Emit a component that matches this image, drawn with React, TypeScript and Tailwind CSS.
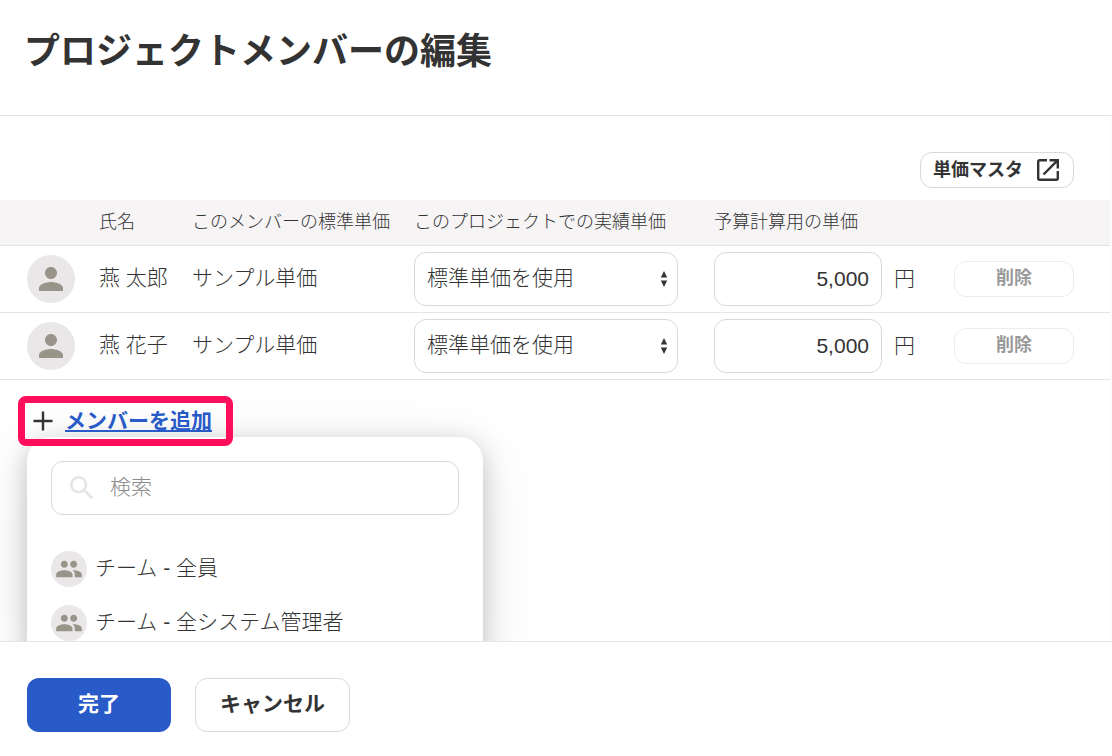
import React, { useState } from 'react';
import { MdPeople, MdPerson, MdSearch } from 'react-icons/md';

interface Member {
  id: string;
  name: string;
  standardRate: string;
  budgetRate: string;
}

const MEMBERS: Member[] = [
  { id: 'taro', name: '燕 太郎', standardRate: 'サンプル単価', budgetRate: '5,000' },
  { id: 'hanako', name: '燕 花子', standardRate: 'サンプル単価', budgetRate: '5,000' },
];

const TEAMS = ['チーム - 全員', 'チーム - 全システム管理者'];

const OpenInNewIcon = () => (
  <svg className="w-[26px] h-[26px]" viewBox="0 0 26 26" fill="none" stroke="currentColor" strokeWidth="2.4" aria-hidden="true">
    <path d="M12 3.200H4.700a1.500 1.500 0 0 0-1.500 1.500V21.300a1.500 1.500 0 0 0 1.500 1.500H21.300a1.500 1.500 0 0 0 1.500-1.500V14" />
    <path d="M14.500 3.200h8.300v8.300M22.300 3.700 8.500 17.500" />
  </svg>
);

const PlusIcon = () => (
  <svg className="w-5 h-5" viewBox="0 0 20 20" fill="none" stroke="currentColor" strokeWidth="2.4" aria-hidden="true">
    <path d="M10 .5v19M.5 10h19" />
  </svg>
);

const SortArrows = () => (
  <svg className="absolute right-2.5 top-[19px] w-2 h-4 pointer-events-none" viewBox="0 0 8 16" fill="currentColor" aria-hidden="true">
    <path d="M4 0l3.200 6.500H.8zM4 16l3.200-6.500H.8z" />
  </svg>
);

const MemberRow: React.FC<{ member: Member }> = ({ member }) => {
  const [budget, setBudget] = useState(member.budgetRate);

  return (
    <tr className="border-b border-[#e5e5e5]">
      <td className="py-1.5 pl-[27px]">
        <div className="flex items-center justify-center w-12 h-12 rounded-full bg-[#e9e7e7] text-[#99948a]">
          <MdPerson className="w-9 h-9" />
        </div>
      </td>
      <td className="px-3 pb-0.5 whitespace-nowrap">{member.name}</td>
      <td className="px-3 pb-0.5 whitespace-nowrap">{member.standardRate}</td>
      <td className="py-1.5 pl-3 pr-6">
        <div className="relative">
          <select
            aria-label={`${member.name} このプロジェクトでの実績単価`}
            className="block w-full h-[54px] pl-3 pr-8 pb-0.5 appearance-none bg-white border border-[#d9d9d9] rounded-xl"
          >
            <option>標準単価を使用</option>
          </select>
          <SortArrows />
        </div>
      </td>
      <td className="py-1.5 px-3">
        <div className="flex items-center gap-3">
          <input
            type="text"
            aria-label={`${member.name} 予算計算用の単価`}
            value={budget}
            onChange={(e) => setBudget(e.target.value)}
            className="w-[168px] h-[54px] px-3 text-right bg-white border border-[#d9d9d9] rounded-xl"
          />
          <span>円</span>
        </div>
      </td>
      <td className="pl-3 pr-9">
        <button
          type="button"
          disabled
          className="block w-[120px] h-9 pb-0.5 text-[18px] font-bold text-[#999999] bg-white border border-[#ececec] rounded-xl"
        >
          削除
        </button>
      </td>
    </tr>
  );
};

const AddMemberMenu: React.FC = () => {
  const [query, setQuery] = useState('');

  return (
    <div className="absolute left-[27px] top-[41px] w-[456px] p-6 bg-white rounded-3xl shadow-[0_6px_24px_rgba(0,0,0,0.2),0_12px_60px_rgba(0,0,0,0.1)]">
      <div className="relative mb-6">
        <MdSearch className="absolute left-[15px] top-[11px] w-8 h-8 text-[#e5e5e5]" />
        <input
          type="text"
          aria-label="検索"
          placeholder="検索"
          value={query}
          onChange={(e) => setQuery(e.target.value)}
          className="block w-full h-[54px] pl-[58px] pr-3 pb-0.5 bg-white border border-[#d9d9d9] rounded-xl placeholder:text-[#8c8c8c]"
        />
      </div>
      <ul>
        {TEAMS.map((team) => (
          <li key={team}>
            <button type="button" className="flex items-center w-full h-[54px] gap-2 pt-1.5">
              <span className="flex items-center justify-center w-9 h-9 rounded-full bg-[#e9e7e7] text-[#99948a]">
                <MdPeople className="w-7 h-7" />
              </span>
              <span className="pb-0.5">{team}</span>
            </button>
          </li>
        ))}
      </ul>
    </div>
  );
};

export default function App() {
  return (
    <div className="flex flex-col h-screen overflow-hidden bg-white text-[21px] leading-[30px] font-light text-[#333333] font-['Liberation_Sans','Noto_Sans_CJK_JP',sans-serif]">
      <header className="pt-[25px] pb-9 pl-6 border-b border-[#e5e5e5]">
        <h1 className="text-[36px] leading-[54px] font-bold">プロジェクトメンバーの編集</h1>
      </header>

      <main className="flex-1 min-h-0 overflow-hidden border-r-2 border-[#fcfcfc]">
        <div className="flex justify-end pt-9 pb-3 pr-9">
          <button
            type="button"
            className="flex items-center h-9 gap-3 px-3 text-[18px] font-bold bg-white border border-[#d9d9d9] rounded-xl"
          >
            単価マスタ
            <OpenInNewIcon />
          </button>
        </div>

        <table className="w-full table-fixed border-collapse">
          <colgroup>
            <col className="w-[87px]" />
            <col className="w-[93px]" />
            <col className="w-[222px]" />
            <col className="w-[300px]" />
            <col className="w-[240px]" />
            <col />
          </colgroup>
          <thead>
            <tr className="h-[45px] text-[18px] text-left whitespace-nowrap bg-[#f6f4f5] border-b border-[#e5e5e5]">
              <td />
              <th className="px-3 font-light">氏名</th>
              <th className="px-3 font-light">このメンバーの標準単価</th>
              <th className="px-3 font-light">このプロジェクトでの実績単価</th>
              <th className="px-3 font-light">予算計算用の単価</th>
              <td />
            </tr>
          </thead>
          <tbody>
            {MEMBERS.map((member) => (
              <MemberRow key={member.id} member={member} />
            ))}
          </tbody>
        </table>

        <div className="relative mt-4">
          <AddMemberMenu />
          <div className="relative flex items-center w-[215px] h-[50px] ml-[18px] pl-2 gap-3 border-[7px] border-[#ff0f5b] rounded-lg">
            <PlusIcon />
            <a href="#add" className="font-bold text-[#285ac8] underline">メンバーを追加</a>
          </div>
        </div>
      </main>

      <footer className="flex gap-6 pt-9 pb-6 pl-[27px] bg-white border-t border-[#e5e5e5]">
        <button type="button" className="w-36 h-[54px] pb-0.5 font-bold text-white bg-[#285ac8] rounded-xl">
          完了
        </button>
        <button type="button" className="h-[54px] px-6 pb-0.5 font-bold bg-white border border-[#d9d9d9] rounded-xl">
          キャンセル
        </button>
      </footer>
    </div>
  );
}
